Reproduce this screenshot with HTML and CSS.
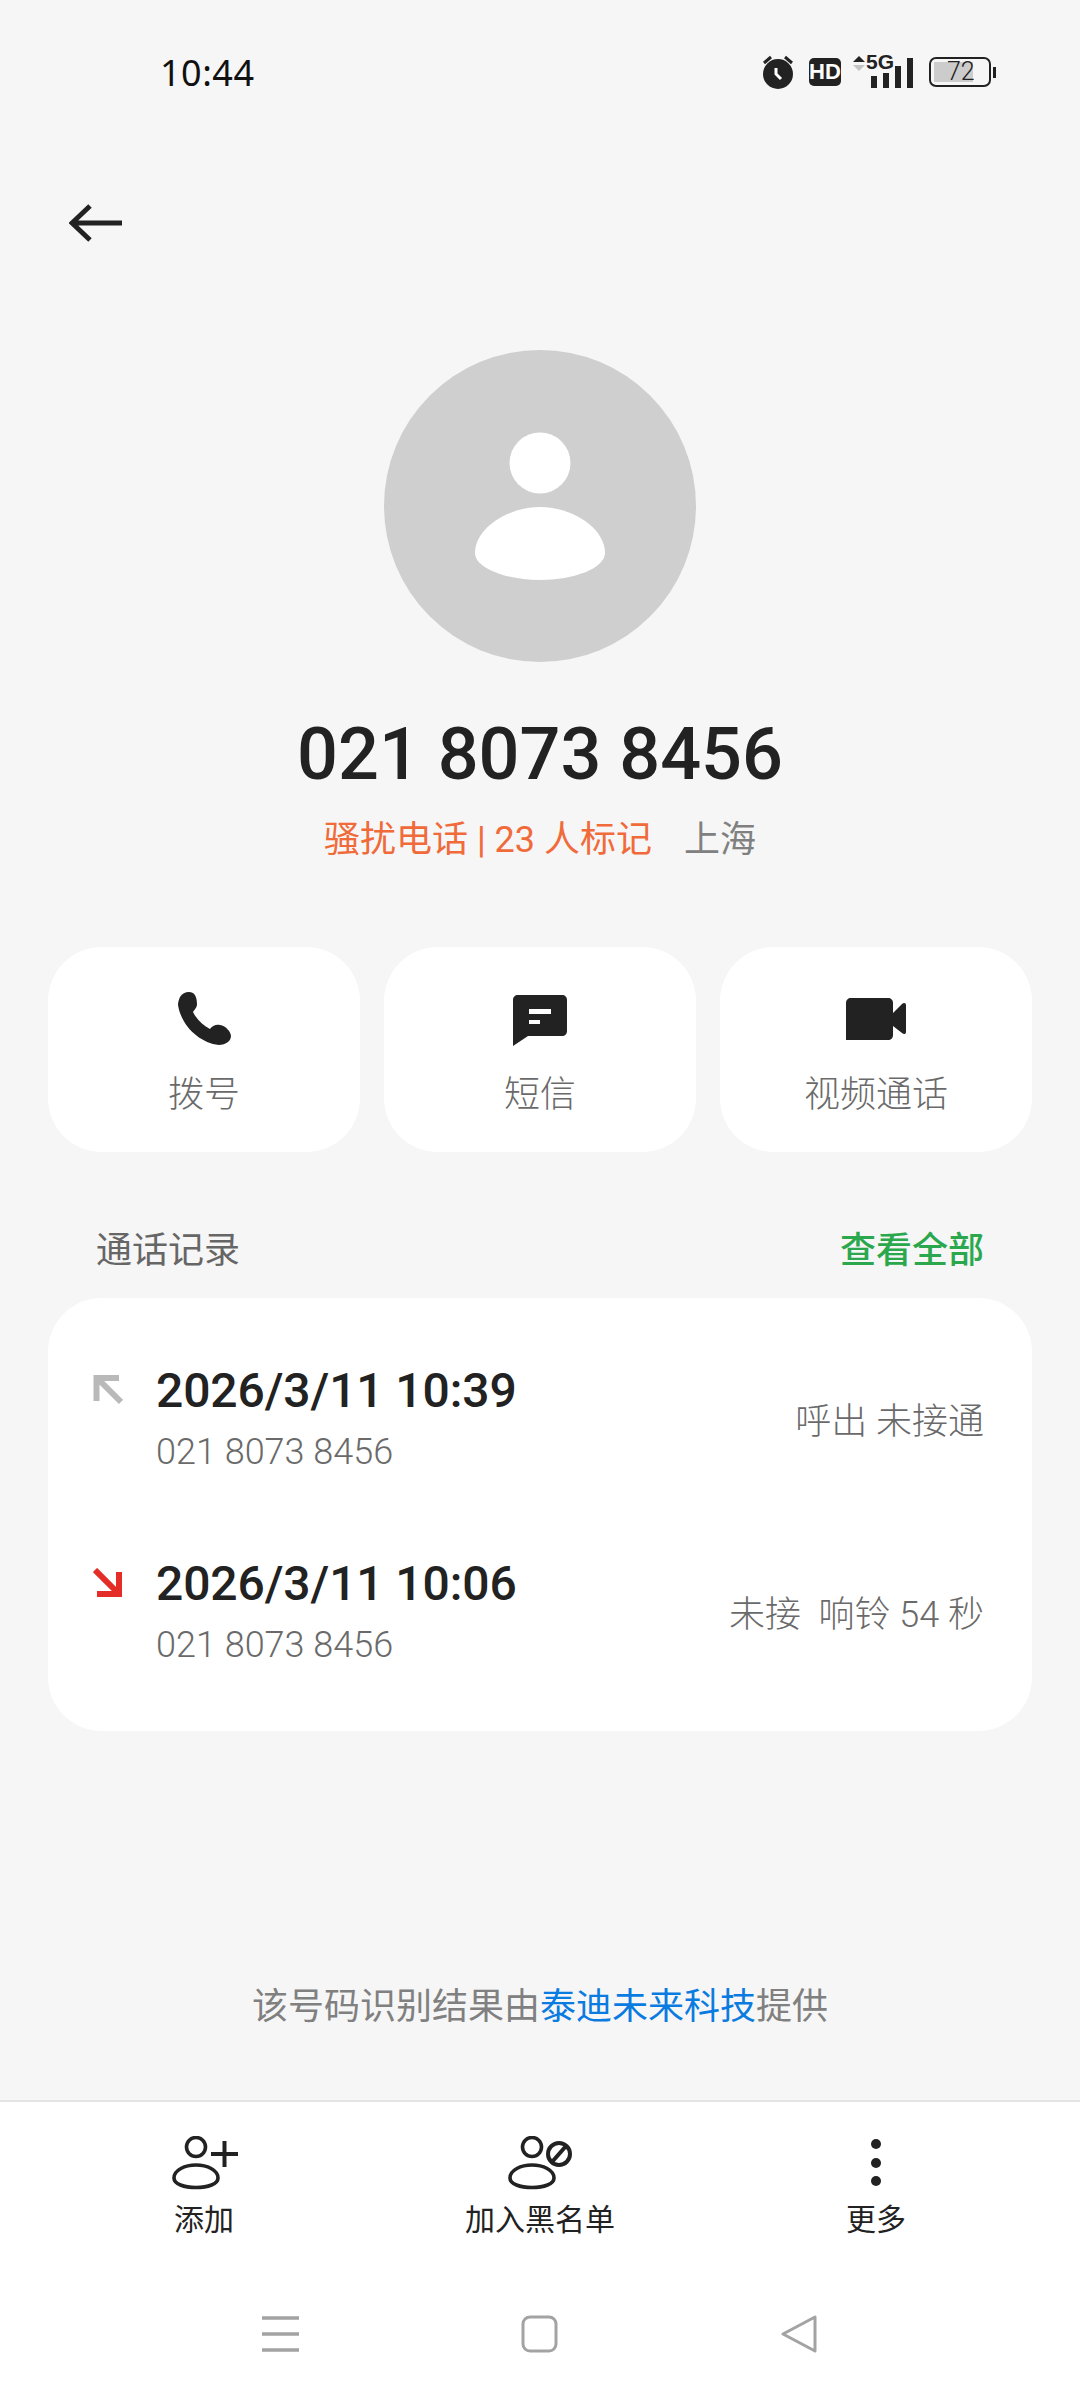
FILE: index.html
```html
<!DOCTYPE html>
<html lang="zh-CN">

<head>
  <meta charset="UTF-8">
  <title>021 8073 8456</title>
  <link rel="stylesheet" href="styles.css">
</head>

<body>
  <div class="page">
    <!-- 状态栏 -->
    <div class="status">
      <span class="time">10:44</span>
      <div class="status-icons">
        <svg class="ic-alarm" width="32" height="34" viewBox="0 0 32 34">
          <circle cx="16" cy="19" r="15" fill="#222"/>
          <path d="M2 8 L9 2 M30 8 L23 2" stroke="#222" stroke-width="3" fill="none"/>
          <path d="M14 13 L14 19 L19 24" stroke="#fff" stroke-width="3" fill="none"/>
        </svg>
        <span class="hd">HD</span>
        <div class="signal">
          <svg class="updown" width="12" height="15" viewBox="0 0 12 15">
            <path d="M6 0 L12 6 L0 6 Z" fill="#222"/>
            <path d="M0 9 L12 9 L6 15 Z" fill="#c4c4c4"/>
          </svg>
          <span class="five-g">5G</span>
          <div class="bars">
            <i class="bar b1"></i><i class="bar b2"></i><i class="bar b3"></i><i class="bar b4"></i>
          </div>
        </div>
        <div class="battery">
          <div class="battery-body"><span class="battery-level">72</span></div>
          <i class="battery-tip"></i>
        </div>
      </div>
    </div>

    <div class="topbar">
      <svg width="54" height="38" viewBox="0 0 54 38">
        <path d="M53 19 L3 19 M21 2 L3 19 L21 36" stroke="#222" stroke-width="5" fill="none"/>
      </svg>
    </div>

    <!-- 号码信息 -->
    <div class="profile">
      <div class="avatar">
        <svg width="132" height="150" viewBox="0 0 132 150">
          <circle cx="66" cy="32" r="30.5" fill="#fff"/>
          <path d="M1 122 C1 97 34 76 66 76 C98 76 131 97 131 122 C131 137 100 149 66 149 C32 149 1 137 1 122 Z" fill="#fff"/>
        </svg>
      </div>
      <h1 class="number">021 8073 8456</h1>
      <p class="tag"><span class="spam">骚扰电话 | 23 人标记</span><span class="place">上海</span></p>
    </div>

    <div class="actions">
      <div class="action">
        <svg width="58" height="58" viewBox="0 0 58 58">
          <g transform="translate(2 2)">
            <path d="M3 5 C6 0 12 -1 16 1 C19 3 20 8 20 12 C20 16 17 18 16 20 C20 28 26 33 33 37 C35 34 39 32 43 33 C49 34 54 40 54 44 C54 50 47 53 42 53 C22 51 4 33 1 13 C1 10 2 7 3 5 Z" fill="#222"/>
          </g>
        </svg>
        <span>拨号</span>
      </div>
      <div class="action">
        <svg width="58" height="58" viewBox="0 0 58 58">
          <path d="M7 5 L51 5 C54 5 56 7 56 10 L56 41 C56 44 54 46 51 46 L17 46 L2 56 L2 10 C2 7 4 5 7 5 Z" fill="#222"/>
          <path d="M18 19 H40 V24 H18 Z M18 30 H29 V34 H18 Z" fill="#fff"/>
        </svg>
        <span>短信</span>
      </div>
      <div class="action">
        <svg width="62" height="58" viewBox="0 0 62 58">
          <path d="M6 8 L43 8 C46 8 48 10 48 13 L48 45 C48 48 46 50 43 50 L1 50 L1 13 C1 10 3 8 6 8 Z" fill="#222"/>
          <path d="M48 23 L57 14 C59 12 61 13 61 15 L61 42 C61 44 59 45 57 43 L48 36 Z" fill="#222"/>
        </svg>
        <span>视频通话</span>
      </div>
    </div>

    <!-- 通话记录 -->
    <div class="log-head">
      <span class="log-title">通话记录</span>
      <span class="log-all">查看全部</span>
    </div>
    <div class="log">
      <div class="call">
        <svg class="call-arrow" width="30" height="30" viewBox="0 0 30 30">
          <path d="M28 27 L4 3 M3.5 26 L3.5 3 L26 3" stroke="#b9b9b9" stroke-width="6" fill="none"/>
        </svg>
        <div class="call-info">
          <div class="call-time">2026/3/11 10:39</div>
          <div class="call-num">021 8073 8456</div>
        </div>
        <div class="call-state">呼出 未接通</div>
      </div>
      <div class="call">
        <svg class="call-arrow" width="30" height="30" viewBox="0 0 30 30">
          <path d="M2 2 L25 25 M4 26 L26 26 L26 4" stroke="#e52d27" stroke-width="6" fill="none"/>
        </svg>
        <div class="call-info">
          <div class="call-time">2026/3/11 10:06</div>
          <div class="call-num">021 8073 8456</div>
        </div>
        <div class="call-state">未接&nbsp; 响铃 54 秒</div>
      </div>
    </div>

    <p class="source">该号码识别结果由<span class="provider">泰迪未来科技</span>提供</p>

    <!-- 底部工具栏 -->
    <div class="bottom">
      <div class="tools">
        <div class="tool">
          <svg width="68" height="54" viewBox="0 0 68 54">
            <circle cx="26" cy="11" r="9.5" stroke="#222" stroke-width="3.6" fill="none"/>
            <path d="M4 42 C4 34 15 29 26 29 C37 29 48 34 48 42 C48 48 38 51.500 26 51.500 C14 51.500 4 48 4 42 Z" stroke="#222" stroke-width="3.6" fill="none"/>
            <path d="M54.500 5 V31 M41 18 H68" stroke="#222" stroke-width="4" fill="none"/>
          </svg>
          <span>添加</span>
        </div>
        <div class="tool">
          <svg width="68" height="54" viewBox="0 0 68 54">
            <circle cx="26" cy="11" r="9.5" stroke="#222" stroke-width="3.6" fill="none"/>
            <path d="M4 42 C4 34 15 29 26 29 C37 29 48 34 48 42 C48 48 38 51.500 26 51.500 C14 51.500 4 48 4 42 Z" stroke="#222" stroke-width="3.6" fill="none"/>
            <circle cx="53" cy="18" r="11" stroke="#222" stroke-width="4" fill="none"/>
            <path d="M46 26 L60 10" stroke="#222" stroke-width="4" fill="none"/>
          </svg>
          <span>加入黑名单</span>
        </div>
        <div class="tool">
          <svg width="68" height="54" viewBox="0 0 68 54">
            <circle cx="34" cy="8" r="5" fill="#222"/>
            <circle cx="34" cy="27" r="5" fill="#222"/>
            <circle cx="34" cy="45" r="5" fill="#222"/>
          </svg>
          <span>更多</span>
        </div>
      </div>
      <div class="nav">
        <svg width="38" height="38" viewBox="0 0 38 38">
          <path d="M0 3 H37 M0 19 H37 M0 35 H37" stroke="#a3a3a3" stroke-width="3.5" fill="none"/>
        </svg>
        <svg width="38" height="38" viewBox="0 0 38 38">
          <rect x="2" y="2" width="33" height="34" rx="7" stroke="#a3a3a3" stroke-width="3" fill="none"/>
        </svg>
        <svg width="38" height="38" viewBox="0 0 38 38">
          <path d="M35 2 L35 36 L3 19 Z" stroke="#a3a3a3" stroke-width="3" stroke-linejoin="round" fill="none"/>
        </svg>
      </div>
    </div>
  </div>
</body>

</html>
```

FILE: styles.css
```css
* {
  box-sizing: border-box;
}

body {
  margin: 0;
  padding: 0;
  background-color: #F6F6F6;
  font-family: Roboto, "Noto Sans CJK SC", sans-serif;
  color: #222;
}

.page {
  display: flex;
  flex-direction: column;
  width: 1080px;
  height: 2400px;
}

.status {
  display: flex;
  align-items: center;
  justify-content: space-between;
  height: 144px;
  padding: 0 84px 0 160px;
}

.time {
  font-family: "Noto Sans", sans-serif;
  font-size: 36px;
  letter-spacing: 0.5px;
  color: #111;
}

.status-icons {
  display: flex;
  align-items: center;
}

.ic-alarm {
  margin-right: 15px;
}

.hd {
  width: 32px;
  height: 28px;
  margin-right: 12px;
  border-radius: 5px;
  background-color: #222;
  color: #fff;
  font-family: "Liberation Sans Narrow", "Liberation Sans", sans-serif;
  font-size: 22px;
  font-weight: 700;
  line-height: 28px;
  text-align: center;
}

.signal {
  position: relative;
  width: 60px;
  height: 32px;
  margin-right: 16px;
}

.updown {
  position: absolute;
  left: 0;
  top: 0;
}

.five-g {
  position: absolute;
  left: 13px;
  top: -4px;
  font-family: "Liberation Sans Narrow", "Liberation Sans", sans-serif;
  font-size: 21px;
  font-weight: 700;
  line-height: 20px;
}

.bars {
  position: absolute;
  left: 18px;
  bottom: 0;
  display: flex;
  align-items: flex-end;
  gap: 6px;
}

.bar {
  display: block;
  width: 6px;
  background-color: #222;
}

.b1 { height: 12px; }
.b2 { height: 15px; }
.b3 { height: 22px; }
.b4 { height: 30px; }

.battery {
  display: flex;
  align-items: center;
  gap: 2px;
}

.battery-body {
  width: 62px;
  height: 30px;
  padding: 3px;
  border: 2px solid #222;
  border-radius: 7px;
}

.battery-level {
  display: block;
  width: 39px;
  height: 20px;
  padding-left: 13px;
  background-color: #ccc;
  font-size: 25px;
  font-weight: 300;
  line-height: 20px;
}

.battery-tip {
  display: block;
  width: 3px;
  height: 11px;
  background-color: #222;
}

.topbar {
  height: 206px;
  padding: 60px 0 0 69px;
}

.profile {
  display: flex;
  flex-direction: column;
  align-items: center;
}

.avatar {
  display: flex;
  align-items: center;
  justify-content: center;
  width: 312px;
  height: 312px;
  border-radius: 50%;
  background-color: #CFCFCF;
}

.number {
  margin: 51px 0 0;
  font-size: 72px;
  font-weight: 500;
  line-height: 84px;
}

.tag {
  margin: 18px 0 0;
  font-size: 36px;
  line-height: 50px;
}

.spam {
  color: #F06A3A;
}

.place {
  margin-left: 32px;
  color: #808080;
}

.actions {
  display: flex;
  gap: 24px;
  margin-top: 82px;
  padding: 0 48px;
}

.action {
  display: flex;
  flex: 1;
  flex-direction: column;
  align-items: center;
  height: 205px;
  padding-top: 43px;
  border-radius: 54px;
  background-color: #FFF;
  font-size: 36px;
  font-weight: 300;
  color: #6A6A6A;
}

.action span {
  margin-top: 22px;
  line-height: 50px;
}

.log-head {
  display: flex;
  justify-content: space-between;
  margin-top: 74px;
  padding: 0 96px;
  font-size: 36px;
  line-height: 50px;
}

.log-title {
  color: #666;
}

.log-all {
  color: #2BA84E;
  font-weight: 500;
}

.log {
  height: 433px;
  margin: 22px 48px 0;
  padding: 60px 48px 0 45px;
  border-radius: 54px;
  background-color: #FFF;
}

.call {
  display: flex;
  align-items: center;
  margin-bottom: 74px;
}

.call:last-child {
  margin-bottom: 0;
}

.call-arrow {
  align-self: flex-start;
  margin-top: 17px;
  margin-right: 33px;
}

.call-info {
  flex: 1;
}

.call-time {
  font-size: 48px;
  font-weight: 500;
  line-height: 66px;
  letter-spacing: -0.1px;
}

.call-num {
  margin-top: 3px;
  font-size: 36px;
  font-weight: 300;
  line-height: 50px;
  color: #6A6A6A;
}

.call-state {
  font-size: 36px;
  font-weight: 300;
  color: #6A6A6A;
}

.source {
  margin: 251px 0 0;
  font-size: 36px;
  line-height: 50px;
  text-align: center;
  color: #808080;
}

.provider {
  color: #0A7BE0;
}

.bottom {
  flex: 1;
  margin-top: 68px;
  border-top: 2px solid #E4E4E4;
  background-color: #FFF;
}

.tools {
  display: flex;
  padding: 34px 36px 0;
}

.tool {
  display: flex;
  flex: 1;
  flex-direction: column;
  align-items: center;
  font-size: 30px;
}

.tool span {
  margin-top: 9px;
  line-height: 42px;
}

.nav {
  display: flex;
  gap: 221px;
  margin-top: 74px;
  padding-left: 262px;
}
```
